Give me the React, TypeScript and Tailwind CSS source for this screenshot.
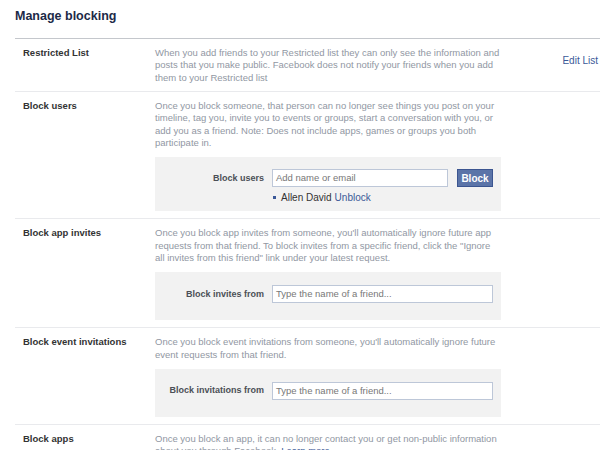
import React from "react";

const font = { fontFamily: '"Liberation Sans", Arial, sans-serif' };

function Row({
  label,
  children,
  right,
}: {
  label: string;
  children: React.ReactNode;
  right?: React.ReactNode;
}) {
  return (
    <div className="flex border-b border-[#e9eaed] pt-[8px] pb-[7px]">
      <div className="w-[140px] shrink-0 pl-[8px] text-[9.5px] font-bold leading-[12.33px] text-[#333333]">
        {label}
      </div>
      <div className="w-[346px] shrink-0">{children}</div>
      {right && <div className="ml-auto pr-[2px]">{right}</div>}
    </div>
  );
}

function Desc({ children }: { children: React.ReactNode }) {
  return (
    <div className="text-[9.5px] leading-[12.33px] text-[#9197a3]">{children}</div>
  );
}

function Input({ placeholder, width }: { placeholder: string; width: string }) {
  return (
    <div
      className={`${width} h-[18px] border border-[#bdc7d8] bg-white pl-[3px] flex items-center text-[9.5px] text-[#777777]`}
    >
      {placeholder}
    </div>
  );
}

function BoxLabel({ children }: { children: React.ReactNode }) {
  return (
    <div className="w-[109px] shrink-0 text-right text-[9px] font-bold text-[#4b4f56]">
      {children}
    </div>
  );
}

export default function App() {
  return (
    <div className="w-[600px] h-[450px] overflow-hidden bg-white pl-[15px]" style={font}>
      <div className="pt-[8px] h-[24px] mb-[14px] text-[12.5px] font-bold leading-[16px] text-[#1c2a47]">
        Manage blocking
      </div>
      <div className="border-t border-[#c4c7cc]">
        <Row
          label="Restricted List"
          right={<span className="text-[10px] leading-[12.33px] text-[#3b5998]">Edit List</span>}
        >
          <Desc>
            When you add friends to your Restricted list they can only see the information and
            posts that you make public. Facebook does not notify your friends when you add them
            to your Restricted list
          </Desc>
        </Row>
        <Row label="Block users">
          <Desc>
            Once you block someone, that person can no longer see things you post on your
            timeline, tag you, invite you to events or groups, start a conversation with you, or
            add you as a friend. Note: Does not include apps, games or groups you both
            participate in.
          </Desc>
          <div className="mt-[8px] bg-[#f2f2f2] pt-[12px] pb-[7px] pr-[8px]">
            <div className="flex items-center">
              <BoxLabel>Block users</BoxLabel>
              <div className="ml-[8px]">
                <Input placeholder="Add name or email" width="w-[176px]" />
              </div>
              <div className="ml-[9px] h-[18px] w-[36px] flex items-center justify-center border border-[#3b5590] bg-[#5b74a8] text-[10px] font-bold text-white">
                Block
              </div>
            </div>
            <div className="mt-[3px] h-[14px] flex items-center pl-[118px] text-[10px] text-[#333333]">
              <span className="inline-block w-[3px] h-[3px] bg-[#3b5998] mr-[5px]" />
              <span>Allen David</span>
              <span className="ml-[3px] text-[#3b5998]">Unblock</span>
            </div>
          </div>
        </Row>
        <Row label="Block app invites">
          <Desc>
            Once you block app invites from someone, you'll automatically ignore future app
            requests from that friend. To block invites from a specific friend, click the "Ignore
            all invites from this friend" link under your latest request.
          </Desc>
          <div className="mt-[8px] bg-[#f2f2f2] pt-[13px] pb-[17px] pr-[8px]">
            <div className="flex items-center">
              <BoxLabel>Block invites from</BoxLabel>
              <div className="ml-[8px]">
                <Input placeholder="Type the name of a friend..." width="w-[221px]" />
              </div>
            </div>
          </div>
        </Row>
        <Row label="Block event invitations">
          <Desc>
            Once you block event invitations from someone, you'll automatically ignore future
            event requests from that friend.
          </Desc>
          <div className="mt-[8px] bg-[#f2f2f2] pt-[13px] pb-[17px] pr-[8px]">
            <div className="flex items-center">
              <BoxLabel>Block invitations from</BoxLabel>
              <div className="ml-[8px]">
                <Input placeholder="Type the name of a friend..." width="w-[221px]" />
              </div>
            </div>
          </div>
        </Row>
        <Row label="Block apps">
          <Desc>
            Once you block an app, it can no longer contact you or get non-public information
            about you through Facebook. <span className="text-[#3b5998]">Learn more</span>
          </Desc>
        </Row>
      </div>
    </div>
  );
}
